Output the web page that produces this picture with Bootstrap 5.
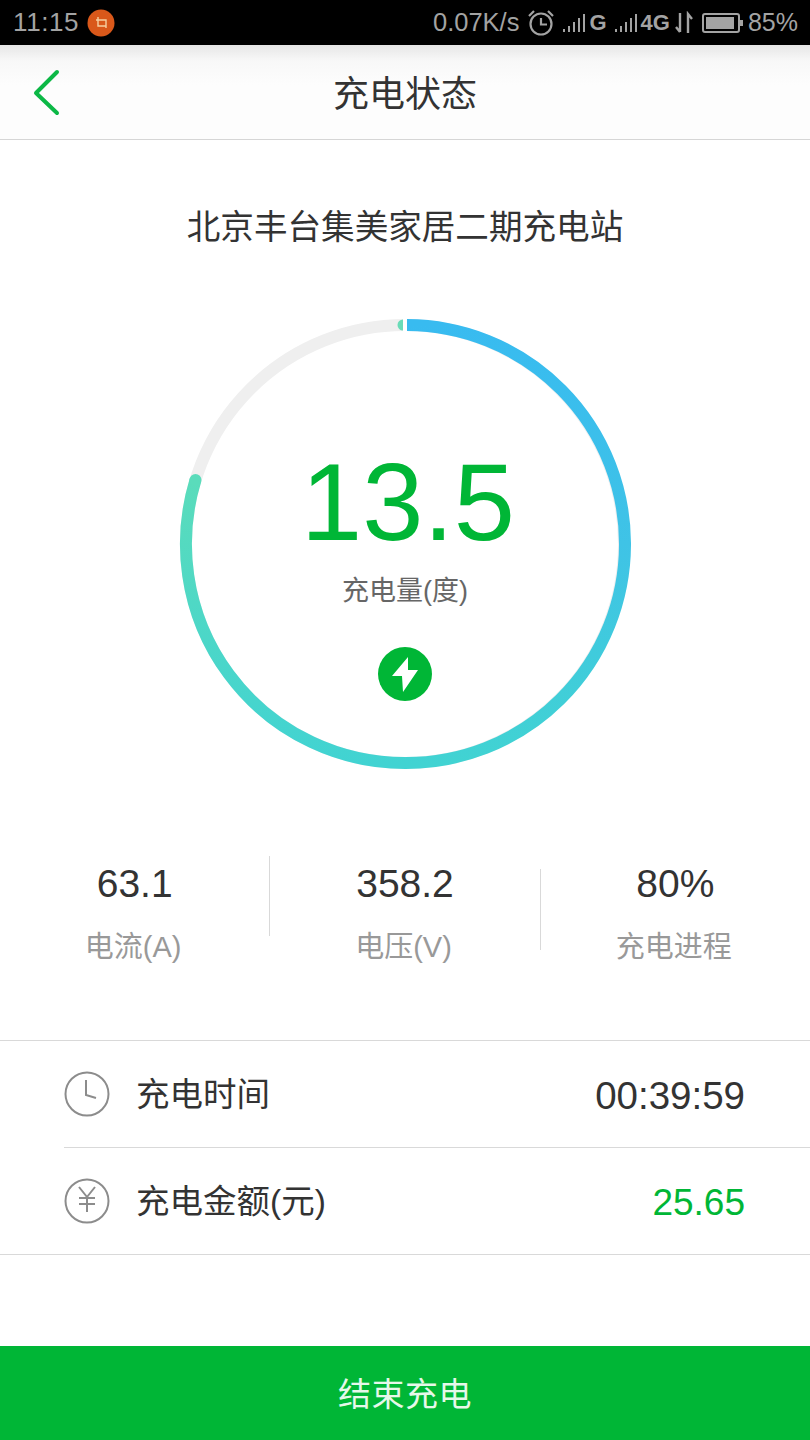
<!DOCTYPE html>
<html lang="zh">
<head>
    <meta charset="UTF-8">
    <title>充电状态</title>
    <link href="https://cdn.jsdelivr.net/npm/bootstrap@5.3.3/dist/css/bootstrap.min.css" rel="stylesheet">
    <style>
    body{background:#fff;font-family:"Liberation Sans","Noto Sans CJK SC",sans-serif;color:#333;}
    .screen{width:810px;height:1440px;overflow:hidden;}
    .screen>*{flex-shrink:0;}
    .status-strip{height:45px;background:#000;color:#a3a3a3;font-size:25px;line-height:45px;padding:0 12px 0 13px;}
    .status-strip .clock-txt{font-size:26px;letter-spacing:.6px;}
    .status-strip .net{font-size:25.5px;}
    .status-strip .sig{font-size:22px;font-weight:700;}
    .top-bar{height:95px;background:linear-gradient(#e6e6e6 0,#f8f8f8 16px,#fdfdfd 40px);border-bottom:1px solid #d6d6d6;}
    .top-bar .ttl{font-size:36px;color:#333;left:0;right:0;text-align:center;line-height:95px;top:2px;}
    .station{font-size:33.6px;line-height:44px;padding-top:66px;color:#333;}
    .gauge-wrap{display:grid;justify-items:center;margin-top:68px;height:452px;}
    .gauge-wrap>*{grid-area:1/1;}
    .gauge-mid{padding-top:114px;}
    .big-num{font-size:110px;line-height:140px;color:#00b636;font-family:"Liberation Sans",sans-serif;padding-left:6px;}
    .big-cap{font-size:27px;line-height:36px;color:#666;margin-top:1px;}
    .bolt{margin-top:38px;}
    .stat-row{margin-top:87px;height:98px;}
    .stat-cell{width:270px;}
    .stat-val{font-size:39px;line-height:54px;color:#333;}
    .stat-cap{font-size:29px;line-height:38px;color:#999;margin-top:17px;padding-right:3px;}
    .split{width:1px;background:#d9d9d9;}
    .split-a{height:80px;margin-top:-1px;}
    .split-b{height:81px;margin-top:12px;}
    .info-list{margin-top:85px;border-top:1px solid #d9d9d9;border-bottom:1px solid #d9d9d9;}
    .info-row{height:107px;padding-left:64px;}
    .info-row+.info-row{height:106px;}
    .info-in{height:100%;padding-right:65px;}
    .info-in.lined{border-bottom:1px solid #d9d9d9;}
    .info-name{font-size:33.500px;margin-left:26px;color:#333;padding-top:3px;}
    .info-val{font-size:38.500px;color:#333;padding-top:4px;}
    .info-val.money{color:#00b636;font-size:37px;}
    .end-btn{margin-top:91px;height:94px;width:100%;background:#00b636;color:#e6f8ea;font-size:33px;border:0;border-radius:0;letter-spacing:.5px;padding-top:10px;}
    </style>
</head>
<body>
<div class="screen d-flex flex-column">
    <div class="status-strip d-flex align-items-center justify-content-between">
        <div class="d-flex align-items-center">
            <span class="clock-txt">11:15</span>
            <svg class="ms-2" width="28" height="28" viewBox="0 0 28 28"><circle cx="14" cy="14" r="13.5" fill="#d9581a"/><path d="M9 11h10v8M11 8v9h8" fill="none" stroke="#f6cfa0" stroke-width="1.4"/></svg>
        </div>
        <div class="d-flex align-items-center">
            <span class="net">0.07K/s</span>
            <svg class="ms-2" width="28" height="28" viewBox="0 0 28 28" fill="none" stroke="#a3a3a3" stroke-width="2.2"><circle cx="14" cy="15" r="10.5"/><path d="M14 9v6.5h6M2 7l5-5M26 7l-5-5"/></svg>
            <svg class="ms-2" width="26" height="20" viewBox="0 0 26 20" fill="#a3a3a3"><rect x="0" y="16" width="2" height="3"/><rect x="5" y="13" width="2" height="6"/><rect x="10" y="9" width="2" height="10"/><rect x="15" y="5" width="2" height="14"/><rect x="20" y="1" width="2" height="18"/></svg>
            <span class="sig">G</span>
            <svg class="ms-2" width="26" height="20" viewBox="0 0 26 20" fill="#a3a3a3"><rect x="0" y="16" width="2" height="3"/><rect x="5" y="13" width="2" height="6"/><rect x="10" y="9" width="2" height="10"/><rect x="15" y="5" width="2" height="14"/><rect x="20" y="1" width="2" height="18"/></svg>
            <span class="sig">4G</span>
            <svg class="ms-1" width="20" height="24" viewBox="0 0 20 24" fill="none" stroke="#a3a3a3" stroke-width="2.4"><path d="M6 2v19M2 16l4 5M14 22V3l4 5"/></svg>
            <svg class="ms-2" width="42" height="20" viewBox="0 0 42 20"><rect x="1" y="1" width="36" height="18" rx="2" fill="none" stroke="#a3a3a3" stroke-width="2"/><rect x="4" y="4" width="28" height="12" fill="#a3a3a3"/><rect x="38" y="7" width="3" height="6" fill="#a3a3a3"/></svg>
            <span class="ms-1">85%</span>
        </div>
    </div>
    <div class="top-bar position-relative">
        <svg class="position-absolute back-ico" style="left:30px;top:23px" width="32" height="48" viewBox="0 0 32 48"><path d="M27 4 6 25l21 20" fill="none" stroke="#0cb846" stroke-width="4" stroke-linecap="round" stroke-linejoin="round"/></svg>
        <div class="ttl position-absolute">充电状态</div>
    </div>
    <div class="station text-center">北京丰台集美家居二期充电站</div>
    <div class="gauge-wrap">
        <svg width="452" height="452" viewBox="0 0 452 452">
            <defs>
                <linearGradient id="arcRight" gradientUnits="userSpaceOnUse" x1="0" y1="6" x2="0" y2="446">
                    <stop offset="0" stop-color="#38bbf0"/>
                    <stop offset=".5" stop-color="#3fc3e6"/>
                    <stop offset="1" stop-color="#41d3d2"/>
                </linearGradient>
                <linearGradient id="arcLeft" gradientUnits="userSpaceOnUse" x1="0" y1="446" x2="0" y2="160">
                    <stop offset="0" stop-color="#41d3d2"/>
                    <stop offset="1" stop-color="#5adcbb"/>
                </linearGradient>
            </defs>
            <circle cx="226" cy="226" r="219" fill="none" stroke="#efefef" stroke-width="12"/>
            <path d="M228 7A219 219 0 0 1 226 445" fill="none" stroke="url(#arcRight)" stroke-width="12"/>
            <path d="M226 445A219 219 0 0 1 16.500 162" fill="none" stroke="url(#arcLeft)" stroke-width="12"/>
            <circle cx="16.500" cy="162" r="6" fill="#5adcbb"/>
            <rect x="224" y="0" width="4" height="13" fill="#fff"/>
            <path d="M224 1.500a5.500 5.500 0 0 0 0 11z" fill="#6adcb8"/>
        </svg>
        <div class="gauge-mid text-center d-flex flex-column align-items-center">
            <div class="big-num">13.5</div>
            <div class="big-cap">充电量(度)</div>
            <svg class="bolt" width="54" height="54" viewBox="0 0 54 54"><circle cx="27" cy="27" r="27" fill="#00b636"/><path d="M30 10 14 29h10l1 16 15-22H30z" fill="#fff"/></svg>
        </div>
    </div>
    <div class="stat-row d-flex align-items-start text-center">
        <div class="stat-cell"><div class="stat-val">63.1</div><div class="stat-cap">电流(A)</div></div>
        <div class="split split-a"></div>
        <div class="stat-cell"><div class="stat-val">358.2</div><div class="stat-cap">电压(V)</div></div>
        <div class="split split-b"></div>
        <div class="stat-cell"><div class="stat-val">80%</div><div class="stat-cap">充电进程</div></div>
    </div>
    <div class="info-list">
        <div class="info-row">
            <div class="info-in lined d-flex align-items-center justify-content-between">
                <div class="d-flex align-items-center">
                    <svg width="46" height="46" viewBox="0 0 46 46" fill="none" stroke="#8c8c8c" stroke-width="2"><circle cx="23" cy="23" r="21.500"/><path d="M22 9v15l10 3"/></svg>
                    <span class="info-name">充电时间</span>
                </div>
                <span class="info-val">00:39:59</span>
            </div>
        </div>
        <div class="info-row">
            <div class="info-in d-flex align-items-center justify-content-between">
                <div class="d-flex align-items-center">
                    <svg width="46" height="46" viewBox="0 0 46 46" fill="none" stroke="#8c8c8c" stroke-width="2"><circle cx="23" cy="23" r="21.500"/><path d="M15 9l8 10 8-10M23 19v15M15 20h16M15 26h16"/></svg>
                    <span class="info-name">充电金额(元)</span>
                </div>
                <span class="info-val money">25.65</span>
            </div>
        </div>
    </div>
    <button class="btn end-btn">结束充电</button>
</div>
<script src="https://cdn.jsdelivr.net/npm/bootstrap@5.3.3/dist/js/bootstrap.bundle.min.js"></script>
</body>
</html>
